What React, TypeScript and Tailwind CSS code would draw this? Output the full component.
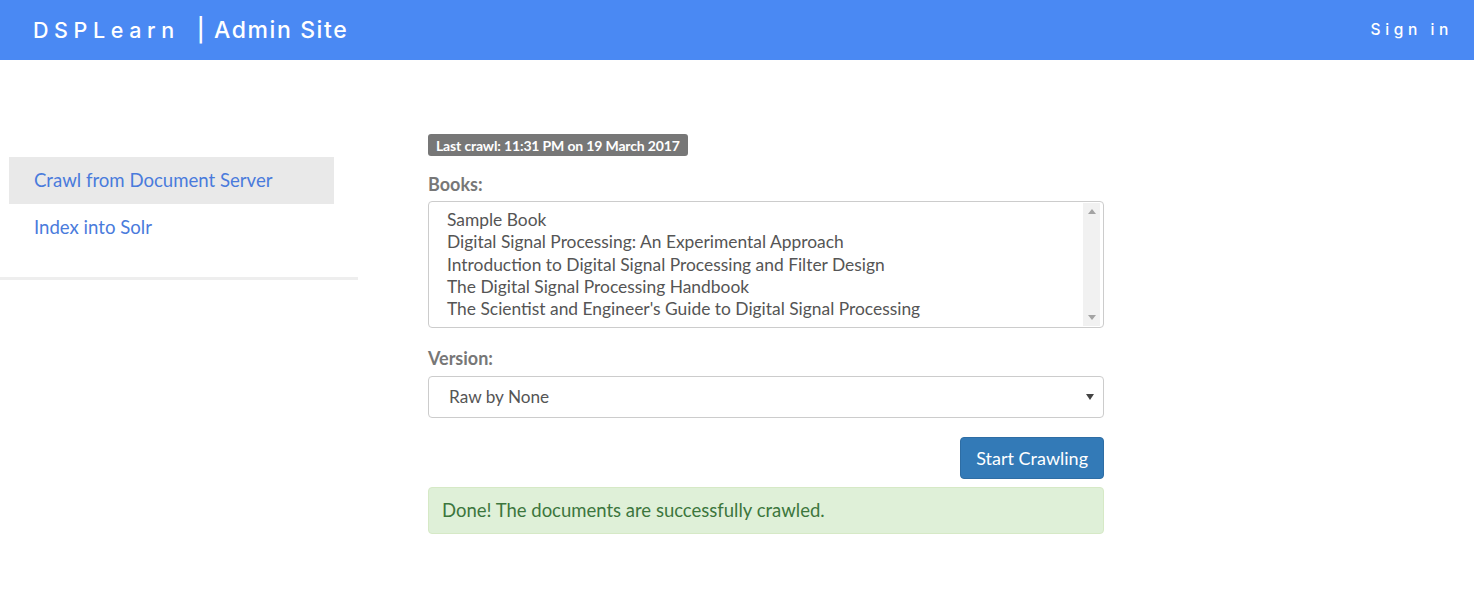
const books = [
  "Sample Book",
  "Digital Signal Processing: An Experimental Approach",
  "Introduction to Digital Signal Processing and Filter Design",
  "The Digital Signal Processing Handbook",
  "The Scientist and Engineer's Guide to Digital Signal Processing",
];

export default function App() {
  return (
    <div className="min-h-[593px] bg-white font-['Lato',_'Open_Sans',_sans-serif]">
      <header className="flex h-[60px] items-center justify-between bg-[#4a89f3] pl-[33px] pr-[21px] font-['Inter',_sans-serif] text-white">
        <div className="flex items-center">
          <span className="text-[21.5px] font-medium tracking-[5.6px]">DSPLearn</span>
          <span className="ml-[17px] text-[23px] font-medium tracking-[1.6px]">| Admin Site</span>
        </div>
        <span className="text-[15.5px] font-medium tracking-[4.6px]">Sign in</span>
      </header>

      <div className="flex pt-[74px]">
        <aside className="w-[358px] shrink-0 pt-[23px]">
          <nav className="flex flex-col pl-[9px] pr-[24px] text-[18.6px] text-[#4a7bdc]">
            <a className="flex h-[47px] items-center bg-[#e9e9e9] px-[25px]">Crawl from Document Server</a>
            <a className="flex h-[47px] items-center px-[25px]">Index into Solr</a>
          </nav>
          <div className="mt-[26px] h-[3px] bg-[#eeeeee]" />
        </aside>

        <main className="ml-[70px] w-[676px]">
          <div className="flex h-[22px] w-fit items-center rounded-[3px] bg-[#777777] px-[8px] text-[14px] font-bold tracking-[-0.15px] text-white">
            Last crawl: 11:31 PM on 19 March 2017
          </div>

          <div className="mt-[15px] text-[18px] font-bold leading-[27px] text-[#777777]">Books:</div>
          <div className="mt-[3px] flex h-[127px] rounded-[4px] border border-[#cccccc] pl-[18px] pr-[3px]">
            <ul className="flex-1 pt-[7px] text-[17.4px] leading-[22.3px] text-[#555555]">
              {books.map((b) => (
                <li key={b}>{b}</li>
              ))}
            </ul>
            <div className="my-[1px] flex w-[17px] flex-col items-center justify-between bg-[#f1f1f1] py-[6px]">
              <svg width="8" height="5" viewBox="0 0 8 5"><path d="M0 5 L4 0 L8 5 Z" fill="#a3a3a3" /></svg>
              <svg width="8" height="5" viewBox="0 0 8 5"><path d="M0 0 L4 5 L8 0 Z" fill="#a3a3a3" /></svg>
            </div>
          </div>

          <div className="mt-[17px] text-[18px] font-bold leading-[27px] text-[#777777]">Version:</div>
          <div className="mt-[4px] flex h-[42px] items-center justify-between rounded-[4px] border border-[#cccccc] pl-[20px] pr-[9px] text-[17.2px] text-[#555555]">
            <span>Raw by None</span>
            <svg width="8" height="6" viewBox="0 0 8 6"><path d="M0 0 L4 6 L8 0 Z" fill="#444444" /></svg>
          </div>

          <div className="mt-[19px] flex justify-end">
            <button className="h-[42px] rounded-[4px] border border-[#2e6da4] bg-[#337ab7] px-[15px] text-[18px] text-white">
              Start Crawling
            </button>
          </div>

          <div className="mt-[8px] flex h-[47px] items-center rounded-[4px] border border-[#d6e9c6] bg-[#dff0d8] px-[13px] text-[18.5px] text-[#3c763d]">
            Done! The documents are successfully crawled.
          </div>
        </main>
      </div>
    </div>
  );
}
